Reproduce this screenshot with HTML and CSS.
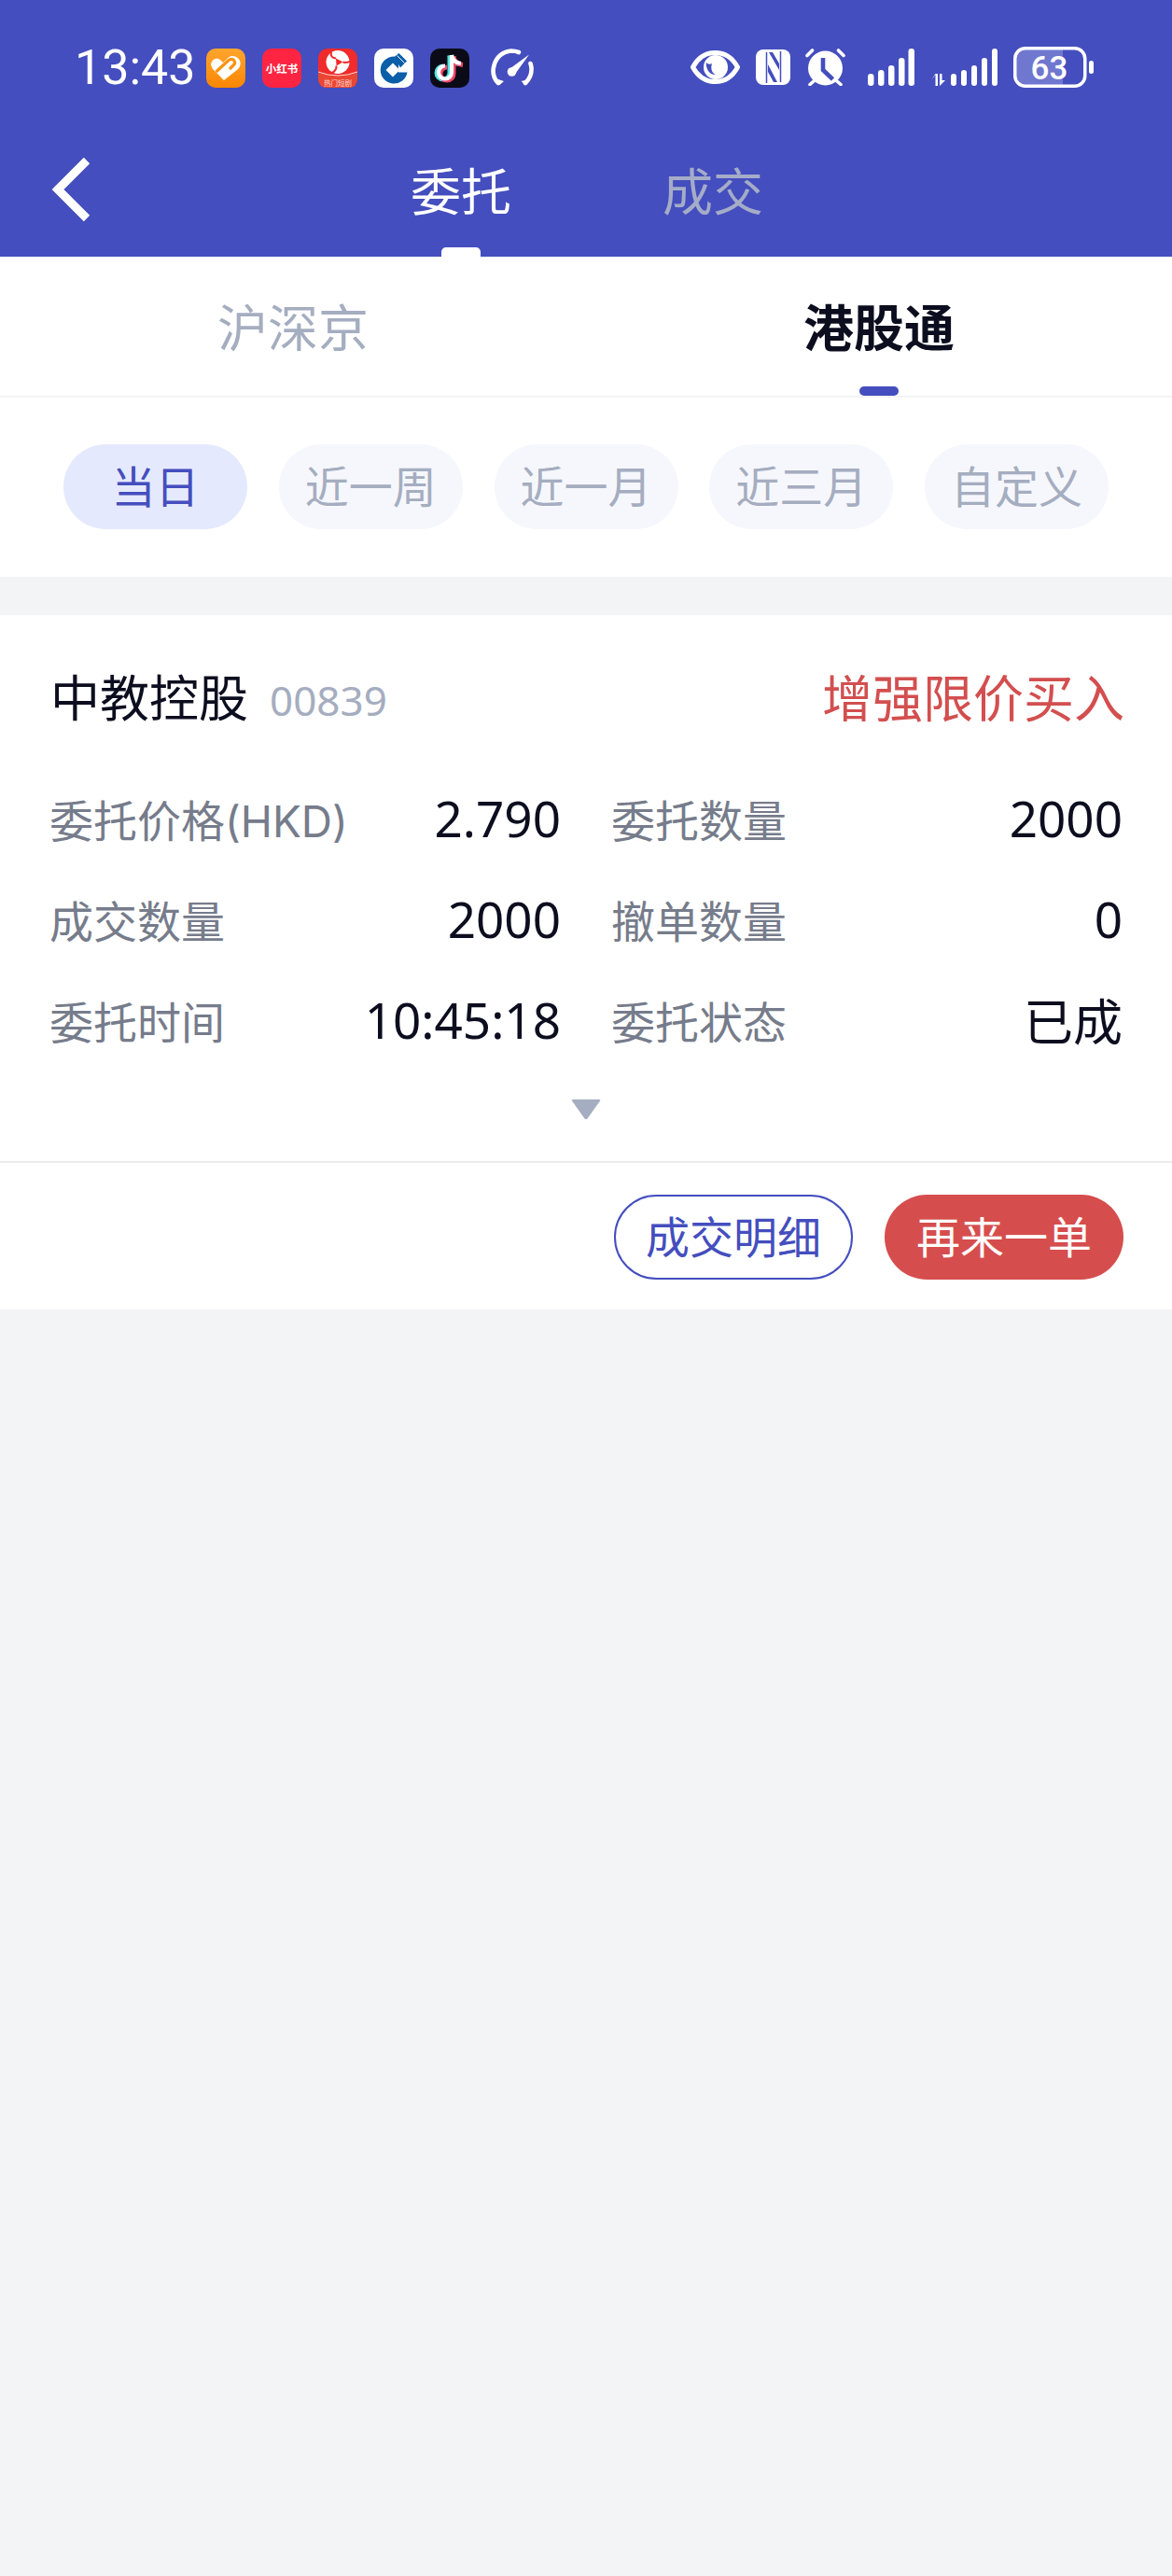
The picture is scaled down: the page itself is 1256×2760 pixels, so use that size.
FILE: index.html
```html
<!DOCTYPE html>
<html lang="zh-CN">
<head>
<meta charset="utf-8">
<title>委托</title>
<link rel="stylesheet" href="styles.css">
</head>
<body>
<header class="appbar">
  <div class="status">
    <span class="clock">13:43</span>
    <div class="apps">
      <svg class="app" viewBox="0 0 42 42"><defs><linearGradient id="og" x1="0" y1="0" x2="0" y2="1"><stop offset="0" stop-color="#ffa52e"/><stop offset="1" stop-color="#fb8603"/></linearGradient></defs><rect width="42" height="42" rx="10" fill="url(#og)"/><path d="M5.500 15C7 10.500 12 9.500 15 12L18 15L24 9.500C29 6 35.500 9.500 36.500 14.500C37 17.500 36 20 33.500 22.500L19 34L7.500 22.500C5.500 20 4.700 17.500 5.500 15Z" fill="#fff"/><path d="M10.500 25L24 12.500Q27.500 10 30 13Q31.500 15.500 29.500 17.500L25 22" fill="none" stroke="#fc9210" stroke-width="3.200"/><path d="M15 33.500L20 36L11 26" fill="#fc9210"/></svg>
      <svg class="app" viewBox="0 0 42 42"><rect width="42" height="42" rx="10" fill="#ff2442"/><text class="xhs" x="21" y="25.500" text-anchor="middle">小红书</text></svg>
      <svg class="app" viewBox="0 0 42 42"><rect width="42" height="42" rx="10" fill="#f12a2b"/><path d="M0 25Q21 33 42 25V32Q42 42 32 42H10Q0 42 0 32Z" fill="#ea4633"/><path d="M0 25Q21 33 42 25" fill="none" stroke="#ffd9cf" stroke-width="1"/><circle cx="21" cy="14.500" r="12.500" fill="#fff"/><path d="M19 10.500L26.500 14.500L19.500 18.500Z" fill="#f12a2b"/><path d="M14 3.500Q12.500 10 19 10.500M34 14Q29 15.500 26.500 14.500M13.500 26.500Q20 24 19.500 18.500" fill="none" stroke="#f12a2b" stroke-width="2"/><text class="drama" x="21" y="39.500" text-anchor="middle">热门短剧</text></svg>
      <svg class="app" viewBox="0 0 42 42"><rect width="42" height="42" rx="10" fill="#fff"/><path d="M21.500 8.500A14.500 14.500 0 1 0 35.500 25.500H26V15.500Z" fill="#0b5fa8"/><path d="M20 15.500L27.500 23L20 30.500L12.500 23Z" fill="#fff"/><path d="M21.500 9L26.500 5L35 13.500L28 20.500Z" fill="#0b5fa8"/><path d="M24.500 7.500L32.500 15.500" stroke="#fff" stroke-width="1"/></svg>
      <svg class="app" viewBox="0 0 42 42"><rect width="42" height="42" rx="10" fill="#0b0b17"/><path d="M23 7V25.500A7 7 0 1 1 16 18.500" fill="none" stroke="#4fe3e4" stroke-width="5" transform="translate(-2 .5)"/><path d="M23 7C24 12.500 27.500 15.500 33 16" fill="none" stroke="#4fe3e4" stroke-width="5" transform="translate(-2 .5)"/><path d="M23 7V25.500A7 7 0 1 1 16 18.500" fill="none" stroke="#f2466a" stroke-width="5" transform="translate(2 1.500)"/><path d="M23 7C24 12.500 27.500 15.500 33 16" fill="none" stroke="#f2466a" stroke-width="5" transform="translate(2 1.500)"/><path d="M23 7V25.500A7 7 0 1 1 16 18.500" fill="none" stroke="#fff" stroke-width="4.200"/><path d="M23 7C24 12.500 27.500 15.500 33 16" fill="none" stroke="#fff" stroke-width="4.200"/></svg>
      <svg class="gauge" viewBox="0 0 46 40"><path d="M8 37C3 32 1.500 25 3.500 18C6 9 13 3 22 2.500C25 2.500 27.500 3 30 4" fill="none" stroke="#fff" stroke-width="4.600" stroke-linecap="round"/><path d="M37 37C41 33 44 28 43.500 21C43.500 19 43 17.500 42.500 16" fill="none" stroke="#fff" stroke-width="4.600" stroke-linecap="round"/><path d="M5 32L9.500 39L14 35M41 33L37 39L32.500 35" fill="#fff"/><path d="M41 6.500L27 26L20.500 21.500Z" fill="#fff"/><circle cx="22.500" cy="25" r="4.800" fill="#fff"/></svg>
    </div>
    <div class="sys">
      <svg class="eye" viewBox="0 0 53 36"><path d="M2.500 18C8 8 16 2.500 26.500 2.500S45 8 50.500 18C45 28 37 33.500 26.500 33.500S8 28 2.500 18Z" fill="none" stroke="#fff" stroke-width="5" stroke-linejoin="round"/><circle cx="27" cy="18" r="13" fill="#fff"/><path d="M17 13C16 20 21 27 27.500 26C23.500 25 21 20 23 14C21 15 18.500 15 17 13Z" fill="#444ebe"/></svg>
      <svg class="nfc" viewBox="0 0 37 38"><rect width="37" height="38" rx="8" fill="#fff"/><path d="M11.500 3V36M26.500 2V35" stroke="#444ebe" stroke-width="1.500" fill="none"/><path d="M14 3L18 3L25 15L25 22ZM13 16L23 35L19 35L13 24Z" fill="#444ebe"/></svg>
      <svg class="alarm" viewBox="0 0 43 40"><circle cx="21.500" cy="21" r="18.500" fill="#fff"/><path d="M19 10V23L29.500 33" fill="none" stroke="#444ebe" stroke-width="4.600"/><path d="M2 7.500L7.500 2M41 7.500L35.500 2" stroke="#fff" stroke-width="3.600" stroke-linecap="round"/><path d="M5 38.500L9 35M38 38.500L34 35" stroke="#fff" stroke-width="3.600" stroke-linecap="round"/></svg>
      <svg class="sig1" viewBox="0 0 50 40"><rect x="0" y="27" width="6.500" height="13" rx="3.200" fill="#fff"/><rect x="11" y="23" width="6.500" height="17" rx="3.200" fill="#fff"/><rect x="22" y="18" width="6.500" height="22" rx="3.200" fill="#fff"/><rect x="33" y="10" width="6.500" height="30" rx="3.200" fill="#fff"/><rect x="43.500" y="0" width="6.500" height="40" rx="3.200" fill="#fff"/></svg>
      <svg class="sig2" viewBox="0 0 72 40"><path d="M1 34L5.500 28V40H8V27H5.500Z" fill="#fff"/><path d="M10 27V40L16 34H12.500V27Z" fill="#fff"/><rect x="22" y="27" width="6" height="13" rx="3" fill="#fff"/><rect x="33" y="23" width="6" height="17" rx="3" fill="#fff"/><rect x="44" y="18" width="6" height="22" rx="3" fill="#fff"/><rect x="55" y="10" width="6" height="30" rx="3" fill="#fff"/><rect x="66" y="0" width="6" height="40" rx="3" fill="#fff"/></svg>
      <svg class="batt" viewBox="0 0 86 44"><path d="M11 3H53V41H11Q3 41 3 33V11Q3 3 11 3Z" fill="#6f77cf"/><rect x="1.750" y="1.750" width="75" height="40.500" rx="11" fill="none" stroke="#fff" stroke-width="3.500"/><rect x="81" y="15" width="5" height="14" rx="2.500" fill="#fff"/><text class="pct" x="38.500" y="34.500" text-anchor="middle">63</text></svg>
    </div>
  </div>
  <nav class="nav">
    <svg class="back" viewBox="0 0 42 70"><path d="M38 4L7 35L38 66" fill="none" stroke="#fff" stroke-width="9"/></svg>
    <div class="navtabs">
      <div class="navtab on"><span>委托</span><i></i></div>
      <div class="navtab"><span>成交</span><i></i></div>
    </div>
  </nav>
</header>

<section class="market">
  <div class="mtab">沪深京</div>
  <div class="mtab on">港股通<i></i></div>
</section>

<section class="chips">
  <span class="chip on">当日</span>
  <span class="chip">近一周</span>
  <span class="chip">近一月</span>
  <span class="chip">近三月</span>
  <span class="chip">自定义</span>
</section>

<article class="card">
  <div class="head">
    <div class="title"><b>中教控股</b><span>00839</span></div>
    <div class="kind">增强限价买入</div>
  </div>
  <div class="grid">
    <div class="row"><label>委托价格<em>(HKD)</em></label><span>2.790</span></div>
    <div class="row"><label>委托数量</label><span>2000</span></div>
    <div class="row"><label>成交数量</label><span>2000</span></div>
    <div class="row"><label>撤单数量</label><span>0</span></div>
    <div class="row"><label>委托时间</label><span>10:45:18</span></div>
    <div class="row"><label>委托状态</label><span>已成</span></div>
  </div>
  <div class="more"><svg viewBox="0 0 32 22"><path d="M1 1.500Q0 0 2 0H30Q32 0 31 1.500L17.500 20.500Q16 22 14.500 20.500Z" fill="#a5adc0"/></svg></div>
  <div class="actions">
    <button class="btn ghost">成交明细</button>
    <button class="btn solid">再来一单</button>
  </div>
</article>
</body>
</html>
```

FILE: styles.css
```css
* { box-sizing: border-box; }
html, body { margin: 0; padding: 0; }
body {
  height: 2760px;
  overflow: hidden;
  background: #f3f4f6;
  font-family: "Noto Sans", "Noto Sans CJK SC", sans-serif;
  color: #0c0e1f;
}
.appbar { height: 275px; background: #444ebe; display: flex; flex-direction: column; }
.status { height: 144px; padding: 52px 0 0 80px; display: flex; align-items: flex-start; }
.clock { font: 400 52px/42px Roboto, sans-serif; color: #fff; width: 141px; white-space: nowrap; }
.apps { display: flex; gap: 18px; align-items: flex-start; }
.app { width: 42px; height: 42px; display: block; }
.gauge { width: 46px; height: 40px; margin-left: 5px; display: block; }
.xhs { font: 700 11.500px "Noto Sans CJK SC", sans-serif; fill: #fff; }
.drama { font: 400 7.500px "Noto Sans CJK SC", sans-serif; fill: #ffd9cf; }
.sys { display: flex; align-items: flex-start; margin-left: 168px; }
.sys svg { display: block; }
.eye { width: 53px; height: 36px; margin-top: 2px; }
.nfc { width: 37px; height: 38px; margin: 1px 0 0 17px; }
.alarm { width: 43px; height: 40px; margin-left: 16px; }
.sig1 { width: 50px; height: 40px; margin-left: 24px; }
.sig2 { width: 72px; height: 40px; margin-left: 17px; }
.batt { width: 86px; height: 44px; margin: -2px 0 0 17px; }
.pct { font: 500 35px Roboto, sans-serif; fill: #fff; }

.nav { flex: 1; display: flex; align-items: flex-start; padding: 24px 0 0 55px; }
.back { width: 42px; height: 70px; display: block; }
.navtabs { display: flex; gap: 166px; margin-left: 345px; }
.navtab { width: 104px; height: 107px; display: flex; flex-direction: column; align-items: center; font-size: 54px; line-height: 74px; color: #a5acc8; }
.navtab span { white-space: nowrap; }
.navtab i { margin-top: auto; width: 42px; height: 10px; border-radius: 5px 5px 0 0; }
.navtab.on { color: #fff; }
.navtab.on i { background: #fff; }

.market { height: 151px; background: #fff; display: flex; border-bottom: 2px solid #f3f4f6; }
.mtab { position: relative; flex: 1; text-align: center; font-size: 54px; line-height: 152px; height: 149px; color: #a5adc0; }
.mtab.on { color: #0c0e1f; font-weight: 700; }
.mtab i { position: absolute; left: 50%; bottom: 0; width: 42px; height: 10px; margin-left: -21px; border-radius: 5px; background: #444ebe; }

.chips { height: 192px; padding: 50px 68px 51px 68px; background: #fff; display: flex; justify-content: space-between; }
.chip { width: 197px; height: 91px; border-radius: 46px; background: #f6f7fc; color: #a5adc0; font-size: 47px; line-height: 91px; text-align: center; }
.chip.on { background: #e5e9fd; color: #444ebe; }

.card { margin-top: 41px; height: 744px; background: #fff; display: flex; flex-direction: column; }
.head { height: 163px; padding: 39px 51px 0 54px; display: flex; justify-content: space-between; align-items: flex-start; }
.title { display: flex; align-items: center; height: 100px; }
.title b { font-weight: 400; font-size: 53px; line-height: 100px; }
.title span { margin-left: 23px; font-size: 44px; color: #a5adc0; line-height: 100px; padding-top: 4px; }
.kind { font-size: 54px; line-height: 100px; color: #d34f4f; }
.grid { padding: 0 51px 0 53px; display: grid; grid-template-columns: 548px 548px; column-gap: 54px; }
.row { height: 108px; display: flex; justify-content: space-between; align-items: center; }
.row label { font-size: 47px; color: #767c8b; }
.row label em { font: 400 46px Inter, sans-serif; }
.row span { font-size: 53px; color: #0c0e1f; }
.more { height: 100px; padding-top: 32px; display: flex; justify-content: center; align-items: flex-start; border-bottom: 2px solid #ebecef; }
.more svg { width: 32px; height: 22px; display: block; }
.actions { flex: 1; padding: 34px 52px 0 0; display: flex; justify-content: flex-end; align-items: flex-start; gap: 34px; }
.btn { width: 256px; height: 91px; border-radius: 46px; font: 400 47px/1 "Noto Sans", "Noto Sans CJK SC", sans-serif; padding: 0; }
.ghost { background: #fff; border: 2px solid #444ebe; color: #444ebe; }
.solid { background: #d64d4d; border: 0; color: #fff; }
```
